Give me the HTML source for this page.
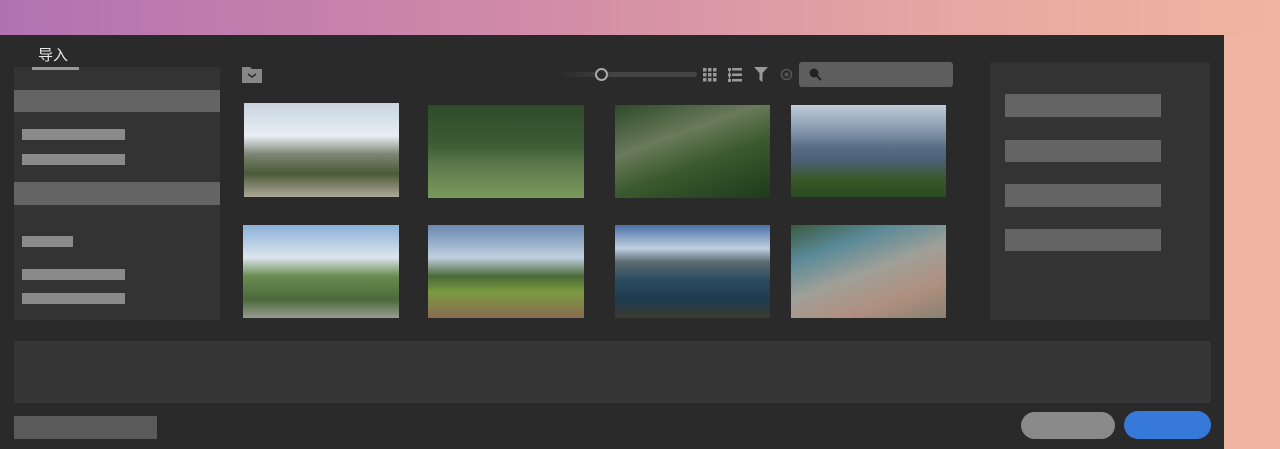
<!DOCTYPE html>
<html><head><meta charset="utf-8"><style>
*{margin:0;padding:0;box-sizing:border-box}
body{width:1280px;height:449px;overflow:hidden;background:linear-gradient(90deg,#b272b2 0%,#d08aa8 40%,#e6a8a2 75%,#efb5a0 100%);position:relative;font-family:"Liberation Sans","Noto Sans CJK SC",sans-serif}
.a{position:absolute}
#dlg{left:0;top:35px;width:1224px;height:414px;background:#2a2a2a}
#side{left:1224px;top:35px;width:56px;height:414px;background:#efb5a0}
.p{position:absolute}
</style></head><body>
<div class="a" id="side"></div>
<div class="a" id="dlg"></div>
<div class="a" style="left:14px;top:67px;width:206px;height:253px;background:#333"></div>
<div class="a" style="left:38px;top:44px;color:#e8e8e8;font-size:15px">导入</div>
<div class="a" style="left:32px;top:67px;width:47px;height:3px;background:#999"></div>
<div class="a" style="left:14px;top:90px;width:206px;height:22px;background:#646464"></div>
<div class="a" style="left:14px;top:182px;width:206px;height:23px;background:#646464"></div>
<div class="a" style="left:22px;top:129px;width:103px;height:11px;background:#8a8a8a"></div>
<div class="a" style="left:22px;top:154px;width:103px;height:11px;background:#8a8a8a"></div>
<div class="a" style="left:22px;top:236px;width:51px;height:11px;background:#8a8a8a"></div>
<div class="a" style="left:22px;top:269px;width:103px;height:11px;background:#8a8a8a"></div>
<div class="a" style="left:22px;top:293px;width:103px;height:11px;background:#8a8a8a"></div>
<svg class="a" style="left:242px;top:66px" width="22" height="18"><path d="M0 1h8l2 2h10v14H0z" fill="#888"/><path d="M6 8l4 3 4-3" stroke="#2a2a2a" stroke-width="1.5" fill="none"/></svg>
<div class="a" style="left:560px;top:72px;width:137px;height:5px;background:linear-gradient(90deg,#2a2a2a,#444 40%,#444);border-radius:3px"></div>
<div class="a" style="left:595px;top:68px;width:13px;height:13px;border:2px solid #aaa;border-radius:50%;background:#2a2a2a"></div>
<svg class="a" style="left:703px;top:68px" width="14" height="14" fill="#999"><rect x="0" y="0" width="3.5" height="3.5"/><rect x="5" y="0" width="3.5" height="3.5"/><rect x="10" y="0" width="3.5" height="3.5"/><rect x="0" y="5" width="3.5" height="3.5"/><rect x="5" y="5" width="3.5" height="3.5"/><rect x="10" y="5" width="3.5" height="3.5"/><rect x="0" y="10" width="3.5" height="3.5"/><rect x="5" y="10" width="3.5" height="3.5"/><rect x="10" y="10" width="3.5" height="3.5"/></svg>
<svg class="a" style="left:728px;top:68px" width="14" height="14" fill="#999"><rect x="0" y="0" width="3" height="3"/><rect x="4" y="0" width="10" height="2.5"/><rect x="0" y="5.5" width="3" height="3"/><rect x="4" y="5.5" width="10" height="2.5"/><rect x="0" y="11" width="3" height="3"/><rect x="4" y="11" width="10" height="2.5"/><rect x="1" y="0" width="1" height="14"/></svg>
<svg class="a" style="left:754px;top:67px" width="14" height="15"><path d="M0 0h14L8.5 6v9l-3-2V6z" fill="#999"/></svg>
<svg class="a" style="left:780px;top:68px" width="13" height="13"><circle cx="6.5" cy="6.5" r="5" stroke="#555" stroke-width="1.6" fill="none"/><circle cx="6.5" cy="6.5" r="2" fill="#555"/></svg>
<div class="a" style="left:799px;top:62px;width:154px;height:25px;background:#5e5e5e;border-radius:3px"></div>
<svg class="a" style="left:808px;top:67px" width="16" height="16"><circle cx="6" cy="6" r="4.5" fill="#222"/><path d="M9 9l4 4" stroke="#222" stroke-width="2"/></svg>
<div class="p" style="left:244px;top:103px;width:155px;height:94px;background:linear-gradient(180deg,#c8d4e0 0%,#e8eef4 35%,#7a8470 55%,#4a5a38 75%,#b0a898 100%)"></div>
<div class="p" style="left:428px;top:105px;width:156px;height:93px;background:linear-gradient(180deg,#2f4a2a 0%,#3e5e36 45%,#5c7a4c 65%,#7a9a5c 100%)"></div>
<div class="p" style="left:615px;top:105px;width:155px;height:93px;background:linear-gradient(160deg,#2e4a2a 0%,#6a7a5a 35%,#3a5a2e 60%,#1e3a1c 100%)"></div>
<div class="p" style="left:791px;top:105px;width:155px;height:92px;background:linear-gradient(180deg,#c0ccd8 0%,#8a9cb0 25%,#5a7088 45%,#4a6078 60%,#3a5a2a 80%,#2a4a20 100%)"></div>
<div class="p" style="left:243px;top:225px;width:156px;height:93px;background:linear-gradient(180deg,#8ab0d8 0%,#dde6ee 35%,#6a8c50 55%,#4a6a3a 80%,#9a9a90 100%)"></div>
<div class="p" style="left:428px;top:225px;width:156px;height:93px;background:linear-gradient(180deg,#6a88b0 0%,#c0d0e0 35%,#4a6a38 55%,#7a9a40 72%,#8a6a50 100%)"></div>
<div class="p" style="left:615px;top:225px;width:155px;height:93px;background:linear-gradient(180deg,#4a70a8 0%,#c0d0e0 25%,#5a6a70 40%,#2a4a60 60%,#1e3a50 80%,#3a3a30 100%)"></div>
<div class="p" style="left:791px;top:225px;width:155px;height:93px;background:linear-gradient(160deg,#3a5a40 0%,#5a8a98 25%,#a0a098 50%,#b09080 75%,#8a8070 100%)"></div>
<div class="a" style="left:990px;top:62px;width:220px;height:258px;background:#333"></div>
<div class="a" style="left:1005px;top:94px;width:156px;height:23px;background:#646464"></div>
<div class="a" style="left:1005px;top:140px;width:156px;height:22px;background:#646464"></div>
<div class="a" style="left:1005px;top:184px;width:156px;height:23px;background:#646464"></div>
<div class="a" style="left:1005px;top:229px;width:156px;height:22px;background:#646464"></div>
<div class="a" style="left:14px;top:341px;width:1197px;height:62px;background:#353535"></div>
<div class="a" style="left:14px;top:416px;width:143px;height:23px;background:#5a5a5a"></div>
<div class="a" style="left:1021px;top:412px;width:94px;height:27px;background:#8a8a8a;border-radius:14px"></div>
<div class="a" style="left:1124px;top:411px;width:87px;height:28px;background:#3779d9;border-radius:14px"></div>
</body></html>
